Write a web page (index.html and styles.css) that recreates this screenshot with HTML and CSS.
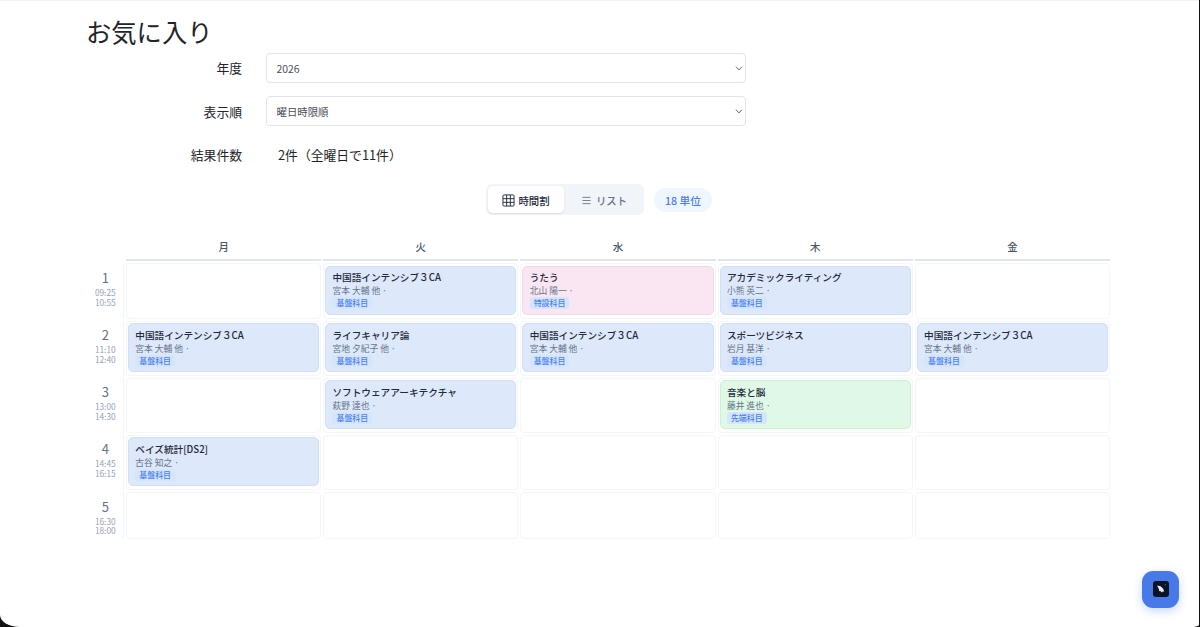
FILE: index.html
```
<!DOCTYPE html>
<html lang="ja">
<head>
  <meta charset="UTF-8" />
  <meta name="viewport" content="width=device-width, initial-scale=1.0"/>
  <title>お気に入り</title>
  <link rel="stylesheet" href="styles.css">
</head>
<body>
  <div class="page">
    <main class="container">
      <h1>お気に入り</h1>

      <form class="filters">
        <label class="filter-label" for="year">年度</label>
        <div class="select-wrap">
          <select id="year"><option>2026</option></select>
          <svg class="chevron" viewBox="0 0 8 5"><path d="M1 .7l3 3.2L7 .7"/></svg>
        </div>

        <label class="filter-label" for="order">表示順</label>
        <div class="select-wrap">
          <select id="order"><option>曜日時限順</option></select>
          <svg class="chevron" viewBox="0 0 8 5"><path d="M1 .7l3 3.2L7 .7"/></svg>
        </div>

        <span class="filter-label">結果件数</span>
        <span class="count">2件（全曜日で11件）</span>
      </form>

      <div class="toolbar">
        <div class="toggle">
          <button type="button" class="active">
            <svg class="icon-grid" viewBox="0 0 14 14"><rect x="1" y="1" width="12" height="12" rx="1"/><path d="M5 1v12M9 1v12M1 5h12M1 9h12"/></svg>
            時間割
          </button>
          <button type="button">
            <svg class="icon-list" viewBox="0 0 10 10"><path d="M.5 1.5h9M.5 5h9M.5 8.5h9"/></svg>
            リスト
          </button>
        </div>
        <span class="units">18 単位</span>
      </div>

      <div class="timetable">
        <div></div>
        <div class="day">月</div>
        <div class="day">火</div>
        <div class="day">水</div>
        <div class="day">木</div>
        <div class="day">金</div>

        <!-- 1限 -->
        <div class="period"><b>1</b><span>09:25</span><span>10:55</span></div>
        <div class="cell"></div>
        <div class="cell"><div class="course"><h2>中国語インテンシブ３CA</h2><p>宮本 大輔 他 ·</p><span class="tag">基盤科目</span></div></div>
        <div class="cell"><div class="course pink"><h2>うたう</h2><p>北山 陽一 ·</p><span class="tag">特設科目</span></div></div>
        <div class="cell"><div class="course"><h2>アカデミックライティング</h2><p>小熊 英二 ·</p><span class="tag">基盤科目</span></div></div>
        <div class="cell"></div>

        <!-- 2限 -->
        <div class="period"><b>2</b><span>11:10</span><span>12:40</span></div>
        <div class="cell"><div class="course"><h2>中国語インテンシブ３CA</h2><p>宮本 大輔 他 ·</p><span class="tag">基盤科目</span></div></div>
        <div class="cell"><div class="course"><h2>ライフキャリア論</h2><p>宮地 夕紀子 他 ·</p><span class="tag">基盤科目</span></div></div>
        <div class="cell"><div class="course"><h2>中国語インテンシブ３CA</h2><p>宮本 大輔 他 ·</p><span class="tag">基盤科目</span></div></div>
        <div class="cell"><div class="course"><h2>スポーツビジネス</h2><p>岩月 基洋 ·</p><span class="tag">基盤科目</span></div></div>
        <div class="cell"><div class="course"><h2>中国語インテンシブ３CA</h2><p>宮本 大輔 他 ·</p><span class="tag">基盤科目</span></div></div>

        <!-- 3限 -->
        <div class="period"><b>3</b><span>13:00</span><span>14:30</span></div>
        <div class="cell"></div>
        <div class="cell"><div class="course"><h2>ソフトウェアアーキテクチャ</h2><p>萩野 達也 ·</p><span class="tag">基盤科目</span></div></div>
        <div class="cell"></div>
        <div class="cell"><div class="course green"><h2>音楽と脳</h2><p>藤井 進也 ·</p><span class="tag">先端科目</span></div></div>
        <div class="cell"></div>

        <!-- 4限 -->
        <div class="period"><b>4</b><span>14:45</span><span>16:15</span></div>
        <div class="cell"><div class="course"><h2>ベイズ統計[DS2]</h2><p>古谷 知之 ·</p><span class="tag">基盤科目</span></div></div>
        <div class="cell"></div>
        <div class="cell"></div>
        <div class="cell"></div>
        <div class="cell"></div>

        <!-- 5限 -->
        <div class="period"><b>5</b><span>16:30</span><span>18:00</span></div>
        <div class="cell"></div>
        <div class="cell"></div>
        <div class="cell"></div>
        <div class="cell"></div>
        <div class="cell"></div>
      </div>
    </main>

    <button type="button" class="fab" aria-label="アシスタント">
      <svg viewBox="0 0 16 16">
        <rect width="16" height="16" rx="3" fill="#0b1326"/>
        <path d="M4 4.500l3.600.7 2.400 2.200 1.300 3.200-1.500-.2-.9 1.100-1.200-1.300-1.600-.1-.1-1.800z" fill="#e4ebf5"/>
        <circle cx="12.2" cy="3.8" r=".8" fill="#36506f"/>
      </svg>
    </button>
  </div>
</body>
</html>
```
FILE: styles.css
```
* { box-sizing: border-box; margin: 0; padding: 0; }

body {
  background: #111;
  color: #212529;
  font-family: 'Noto Sans CJK JP', sans-serif;
  font-size: 12.8px;
}

.page {
  width: calc(100% - 1.5px);
  height: 627px;
  background: #fff;
  border-top: 1px solid #f1f2f4;
  border-radius: 0 0 9px 20px / 0 0 2px 12px;
  overflow: hidden;
}

.container {
  width: 1024px;
  margin-left: 86px;
  padding-top: 13px;
}

h1 {
  font-size: 25.3px;
  font-weight: 400;
  line-height: 34px;
  margin-bottom: 5px;
}

.filters {
  display: grid;
  grid-template-columns: 156px 480px;
  grid-auto-rows: 30px;
  gap: 13.3px 24px;
  align-items: center;
}

.filter-label {
  padding-bottom: .5px;
  text-align: right;
}

.count {
  padding-bottom: 1px;
  padding-left: 12px;
}

.select-wrap { position: relative; }

select {
  display: block;
  width: 100%;
  height: 30px;
  padding: 0 9.5px;
  appearance: none;
  background: #fff;
  border: 1px solid #dfe3ea;
  border-radius: 4px;
  color: #495057;
  font-family: inherit;
  font-size: 10.4px;
}

.chevron {
  position: absolute;
  right: 3px;
  top: 13px;
  width: 8px;
  height: 5px;
  fill: none;
  stroke: #666;
}

.toolbar {
  display: flex;
  justify-content: center;
  align-items: center;
  gap: 10px;
  margin-top: 14.5px;
  padding-left: 2px;
}

.toggle {
  display: flex;
  width: 158px;
  height: 31px;
  padding: 2px;
  background: #f1f5f9;
  border-radius: 6px;
}

.toggle button {
  display: flex;
  flex: 1;
  align-items: center;
  justify-content: center;
  gap: 5px;
  padding-top: 1px;
  padding-left: 3px;
  border: none;
  border-radius: 5px;
  background: none;
  color: #64748b;
  font-family: inherit;
  font-size: 10.4px;
  font-weight: 500;
}

.toggle .active {
  flex: 0 0 76px;
  gap: 3px;
  padding-left: 0;
  background: #fff;
  color: #1e293b;
  box-shadow: 0 1px 2px rgba(15, 23, 42, 0.1);
}

.toggle svg { fill: none; stroke: currentColor; }
.icon-grid { width: 13px; height: 13px; }
.icon-list { width: 9px; height: 9px; }

.units {
  padding: 1px 11px 0;
  border-radius: 12px;
  background: #eff6ff;
  color: #4a7df0;
  font-size: 10.7px;
  font-weight: 500;
  line-height: 23px;
}

.timetable {
  display: grid;
  grid-template-columns: 38px repeat(5, 1fr);
  grid-template-rows: 29px repeat(4, 55.2px) 47px;
  gap: 2px;
  margin-top: 17.4px;
}

.day {
  border-bottom: 2px solid #e2e5ee;
  color: #475569;
  font-size: 10.4px;
  font-weight: 500;
  line-height: 29px;
  text-align: center;
}

.period {
  display: flex;
  flex-direction: column;
  align-items: center;
  padding-top: 5.4px;
  padding-left: 1.5px;
  border-right: 1px solid #f1f5f9;
  color: #94a3b8;
  font-size: 8.3px;
  line-height: 9.7px;
}

.period b {
  margin-bottom: 1px;
  color: #64748b;
  font-size: 13px;
  font-weight: 400;
  line-height: 18px;
}

.cell {
  padding: 1px;
  border: 1px solid #f3f6fa;
  border-radius: 4px;
}

.course {
  height: 49px;
  margin-top: .4px;
  padding: 3.5px 6.3px;
  background: #dde8fa;
  border: 1px solid #d1def3;
  border-radius: 5px;
  line-height: 13px;
}

.course.pink {
  background: #fae6f2;
  border-color: #f3d9e7;
}

.course.green {
  background: #e0f9e6;
  border-color: #cdefd6;
}

.course h2 {
  color: #1e293b;
  font-size: 9.65px;
  font-weight: 500;
  line-height: 14px;
}

.course p {
  color: #64748b;
  font-size: 8.75px;
  line-height: 13px;
}

.tag {
  display: block;
  width: max-content;
  padding: 0 4px;
  border-radius: 3px;
  background: #d5e5fc;
  color: #4a80f2;
  font-size: 7.95px;
  font-weight: 500;
  line-height: 12px;
}

.fab {
  position: fixed;
  right: 21px;
  bottom: 19.5px;
  display: flex;
  align-items: center;
  justify-content: center;
  width: 37px;
  height: 37px;
  border: none;
  border-radius: 11px;
  background: #4779e8;
  box-shadow: 0 3px 10px rgba(71, 121, 232, 0.3);
}

.fab svg { width: 16px; height: 16px; }
```
